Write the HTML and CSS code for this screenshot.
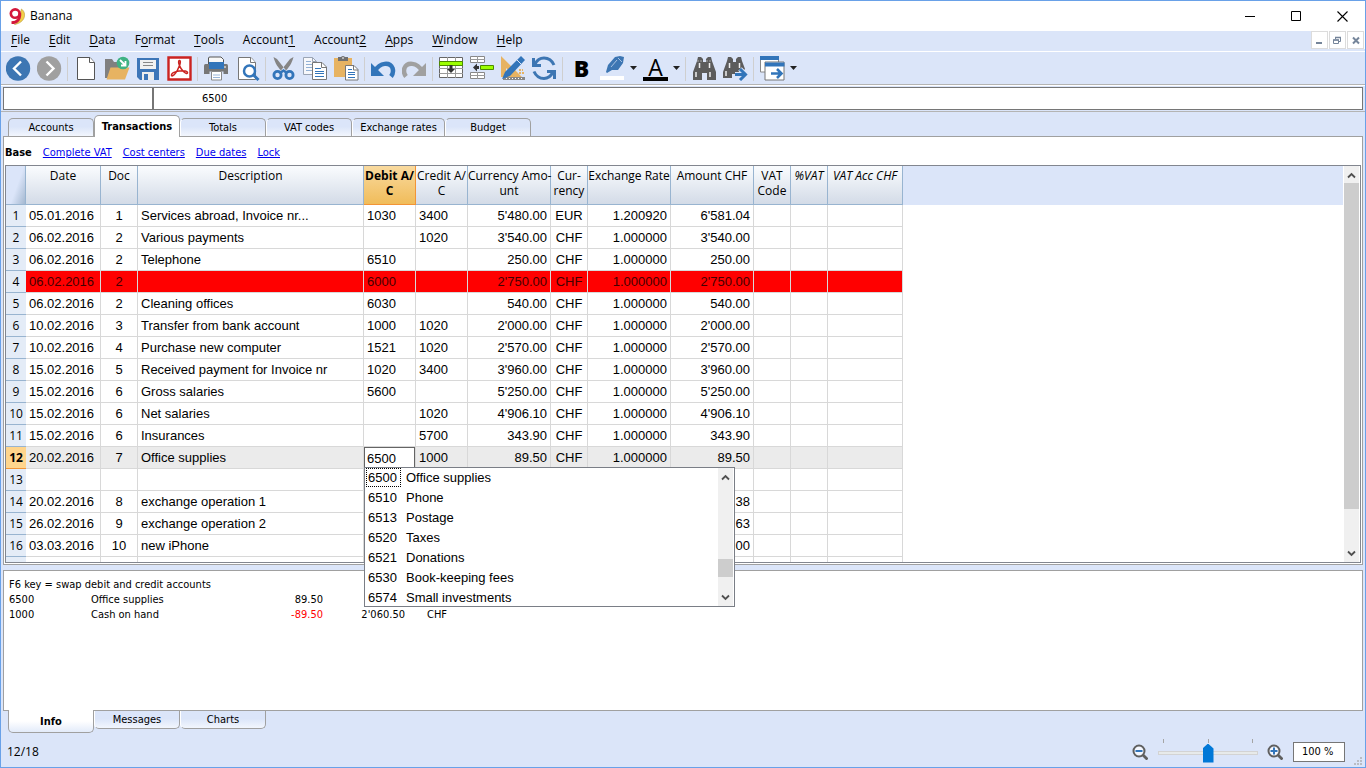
FILE: index.html
```html
<!DOCTYPE html>
<html lang="en">
<head>
<meta charset="utf-8">
<title>Banana</title>
<link rel="stylesheet" href="styles.css">
</head>
<body>
<div class="window">
  <header class="titlebar">
    <svg class="logo" viewBox="0 0 16 17"><path d="M12.500 1C18 5 16.500 14.500 5.500 16.500C11 13.500 12.500 9 11.700 3.500Z" fill="#f3cf49" stroke="#b89a3c" stroke-width=".6"/><ellipse cx="6.200" cy="5.600" rx="4.400" ry="4.200" fill="#fff" stroke="#d3173a" stroke-width="2.600"/><path d="M10.700 5C11.300 10.500 9 14.500 2.500 14.700" fill="none" stroke="#d3173a" stroke-width="2.800"/></svg>
    <h1 class="title">Banana</h1>
    <div class="caption-buttons">
      <button aria-label="Minimize"><svg viewBox="0 0 11 11"><path d="M0 5.500H10" stroke="#000"/></svg></button>
      <button aria-label="Maximize"><svg viewBox="0 0 11 11"><path d="M.5.5H9.500V9.500H.5Z" fill="none" stroke="#000"/></svg></button>
      <button aria-label="Close"><svg viewBox="0 0 11 11"><path d="M.5.5L10.500 10.500M10.500.5L.5 10.500" stroke="#000" stroke-width="1.100"/></svg></button>
    </div>
  </header>

  <nav class="menubar">
    <button><u>F</u>ile</button>
    <button><u>E</u>dit</button>
    <button><u>D</u>ata</button>
    <button>F<u>o</u>rmat</button>
    <button><u>T</u>ools</button>
    <button>Account<u>1</u></button>
    <button>Account<u>2</u></button>
    <button><u>A</u>pps</button>
    <button><u>W</u>indow</button>
    <button><u>H</u>elp</button>
    <div class="mdi-buttons">
      <button aria-label="Minimize document"><svg viewBox="0 0 9 9"><path d="M1 7H7" stroke="#75859a" stroke-width="2"/></svg></button>
      <button aria-label="Restore document"><svg viewBox="0 0 9 9"><path d="M2.500 3V1.500H7.500V5.500H6M.5 4V7.500H5.500V4Z" fill="none" stroke="#75859a"/><path d="M2 1.500H8M0 4H6" stroke="#75859a" stroke-width="1.500"/></svg></button>
      <button aria-label="Close document"><svg viewBox="0 0 9 9"><path d="M2 1.500L8 7.500M8 1.500L2 7.500" stroke="#75859a" stroke-width="2"/></svg></button>
    </div>
  </nav>

  <div class="toolbar" role="toolbar" aria-label="Main">
    <button aria-label="Back"><svg viewBox="0 0 25 25"><circle cx="12" cy="12.500" r="12.200" fill="#3d76b3"/><path d="M15 5.500L8 12.500L15 19.500" fill="none" stroke="#fff" stroke-width="2.400"/></svg></button>
    <button aria-label="Forward"><svg viewBox="0 0 25 25"><circle cx="12" cy="12.500" r="12.200" fill="#a0a0a0"/><path d="M9.500 5.500L16.500 12.500L9.500 19.500" fill="none" stroke="#fff" stroke-width="2.400"/></svg></button>
    <span class="sep"></span>
    <button aria-label="New"><svg viewBox="0 0 25 25"><path d="M3.500 1.500H16L20.500 6.500V23.500H3.500Z" fill="#fff" stroke="#555"/><path d="M15.500 1.500V6.500H20.500" fill="#fff" stroke="#555"/></svg></button>
    <button aria-label="Open"><svg viewBox="0 0 25 25"><path d="M0 3H7L9 6H17V13H6L3 22H0Z" fill="#808080"/><path d="M5.500 11.500H24.500L20 23.500H1.500Z" fill="#e7b362"/><circle cx="18" cy="7" r="6.300" fill="#3fb283"/><path d="M15 4L20 9M20.500 5V9.500H16" fill="none" stroke="#fff" stroke-width="1.800"/></svg></button>
    <button aria-label="Save"><svg viewBox="0 0 25 25"><path d="M1 2H23V24H4L1 21Z" fill="#3d76b8"/><path d="M4 4H20V13H4Z" fill="#f1f1f1"/><path d="M7 6.500H17M7 9.500H17" stroke="#888"/><path d="M6 16H18V24H6Z" fill="#ededed"/><path d="M8 18H12V24H8Z" fill="#3d76b8"/></svg></button>
    <button aria-label="Export PDF"><svg viewBox="0 0 25 25"><path d="M1.500 1.500H23.500V23.500H1.500Z" fill="#fff" stroke="#cb2320" stroke-width="2.400"/><path d="M4.500 19.500C4 16.500 9 15.500 12 15C17 14.200 21 15 20.500 17C19.500 19 14 14 12.500 9.500C11.300 6.500 11.300 4.500 12.500 4.500C14.500 5 12.500 10 10.500 14C8.500 18 5.500 21 4.500 19.500Z" fill="none" stroke="#cb2320" stroke-width="1.500"/></svg></button>
    <span class="sep"></span>
    <button aria-label="Print"><svg viewBox="0 0 25 25"><path d="M0 9.500Q0 8 1.500 8H22.500Q24 8 24 9.500V18H0Z" fill="#777"/><path d="M4.500 8V2Q4.500 1 6 1H17L19.500 3.500V8" fill="#f8f8f8" stroke="#555"/><path d="M5 6H20V13H5Z" fill="#3275ba"/><path d="M5.500 15.500H19.500V18H5.500Z" fill="#dbe5f9"/><path d="M7.500 15.500H17.500V24H7.500Z" fill="#fff" stroke="#888"/><path d="M9 19H16M9 21.500H16" stroke="#99b6d9"/><path d="M20 11H22" stroke="#fff"/></svg></button>
    <button aria-label="Print preview"><svg viewBox="0 0 25 25"><path d="M3.500 1.500H16L20.500 6.500V23.500H3.500Z" fill="#fff" stroke="#777"/><path d="M15.500 1.500V6.500H20.500" fill="#fff" stroke="#777"/><circle cx="14.500" cy="15" r="5.500" fill="#fff" stroke="#3275ba" stroke-width="2.500"/><path d="M18.500 19L23.500 24" stroke="#3275ba" stroke-width="3"/></svg></button>
    <span class="sep"></span>
    <button aria-label="Cut"><svg viewBox="0 0 25 25"><path d="M1.500 1L5 3L14.500 15L11.500 17C6 12 3 7 1.500 1ZM21.500 1L18 3L8.500 15L11.500 17C17 12 20 7 21.500 1Z" fill="#858585"/><circle cx="5.500" cy="19" r="3.600" fill="none" stroke="#3275ba" stroke-width="2.800"/><circle cx="17.500" cy="19" r="3.600" fill="none" stroke="#3275ba" stroke-width="2.800"/><path d="M8 17L11.500 14.500L15 17" fill="none" stroke="#3275ba" stroke-width="2.400"/></svg></button>
    <button aria-label="Copy"><svg viewBox="0 0 25 25"><path d="M.5 1.500H9.500L13.500 5.500V18.500H.5Z" fill="#f7f8fb" stroke="#9ba5b5"/><path d="M9.500 1.500V5.500H13.500" fill="none" stroke="#9ba5b5"/><path d="M3 5.500H8M3 8.500H10M3 11.500H10M3 14.500H10" stroke="#92b1d6"/><path d="M9.500 6.500H19L23.500 11V23.500H9.500Z" fill="#fff" stroke="#777"/><path d="M18.500 6.500V11.500H23.500" fill="none" stroke="#777"/><path d="M12 12.500H18M12 15.500H21M12 17.500H21M12 20.500H21" stroke="#3275ba"/></svg></button>
    <button aria-label="Paste"><svg viewBox="0 0 25 25"><path d="M0 2H18V21H0Z" fill="#e7b362"/><path d="M4 1H7Q9-1 11 1H14V5H4Z" fill="#707070"/><path d="M8 2H10" stroke="#fff"/><path d="M11.500 9.500H20L24 13.500V24H11.500Z" fill="#fff" stroke="#777"/><path d="M19.500 9.500V14H24" fill="none" stroke="#777"/><path d="M14 13.500H18M14 16.500H21M14 18.500H21M14 21.500H21" stroke="#3275ba"/></svg></button>
    <span class="sep"></span>
    <button aria-label="Undo"><svg viewBox="0 0 25 25"><path d="M4 15C9 6 19 6 21.500 12C22.500 15 22 18 20 20.500" fill="none" stroke="#3275ba" stroke-width="4.500"/><path d="M0 7V20H13Z" fill="#3275ba"/></svg></button>
    <button aria-label="Redo"><svg viewBox="0 0 25 25"><path d="M20 15C15 6 5 6 2.500 12C1.500 15 2 18 4 20.500" fill="none" stroke="#a0a0a0" stroke-width="4.500"/><path d="M24 7V20H11Z" fill="#a0a0a0"/></svg></button>
    <span class="sep"></span>
    <button aria-label="Insert rows"><svg viewBox="0 0 25 25"><path d="M.5 1.500H23.500V21.500H.5Z" fill="#fff" stroke="#666"/><path d="M8.500 1V22M16.500 1V22M0 12.500H24M0 17.500H24" stroke="#999"/><path d="M.5 5.500H23.500V9.500H.5Z" fill="#9cff00" stroke="#4d8b00"/><path d="M12 9V14" stroke="#333" stroke-width="3"/><path d="M8 13H16L12 17Z" fill="#333"/></svg></button>
    <button aria-label="Delete rows"><svg viewBox="0 0 25 25"><path d="M.5.5H14.500V6.500H.5ZM.5 16.500H14.500V22.500H.5Z" fill="#fff" stroke="#888"/><path d="M0 3.500H15M0 19.500H15M7.500 0V7M7.500 16V23" stroke="#999"/><path d="M10.500 9.500H23.500V13.500H10.500Z" fill="#9cff00" stroke="#4d8b00"/><path d="M5 11.500H9" stroke="#333" stroke-width="3"/><path d="M7 7.500V15.500L3 11.500Z" fill="#333"/></svg></button>
    <button aria-label="Design"><svg viewBox="0 0 25 25"><path d="M0 0V21H21ZM5 12L10 17H5Z" fill="#e7b362" fill-rule="evenodd"/><path d="M2 21H24V24H2Z" fill="#888"/><path d="M5 22.500H23" stroke="#fff" stroke-dasharray="1 2"/><path d="M20 0L24 4L9 20L1 23L4 16Z" fill="#3275ba"/><path d="M16 4L20.500 8.500" stroke="#dbe5f9"/><path d="M18 14H22M18 17H23" stroke="#e7b362" stroke-width="2" stroke-dasharray="2 1"/></svg></button>
    <button aria-label="Refresh"><svg viewBox="0 0 25 25"><path d="M3 8C5 4 8 2 12 2C17 2 20 4.500 22 9M21 16C19 20 16 22.500 12 22.500C7 22.500 4 20 2 15.500" fill="none" stroke="#3d76b3" stroke-width="3"/><path d="M1.500 2V9.500H9M22.500 23V15.500H15" fill="none" stroke="#3d76b3" stroke-width="3"/></svg></button>
    <span class="sep"></span>
    <button class="bold-button" aria-label="Bold">B</button>
    <button aria-label="Highlight colour"><svg viewBox="0 0 25 25"><path d="M0 20H24V24H0Z" fill="#fff"/><path d="M15 1L20 0L24 1L23 7L18 14L12 14L7 17L6 16L8 9Z" fill="#3d76b3"/><path d="M11 11L17 4M18 2L22 6" stroke="#a6c1e2"/></svg></button>
    <button class="drop" aria-label="Highlight options"><svg viewBox="0 0 8 5"><path d="M0 0H7L3.500 4Z" fill="#222"/></svg></button>
    <button class="font-colour" aria-label="Text colour">A</button>
    <button class="drop" aria-label="Text colour options"><svg viewBox="0 0 8 5"><path d="M0 0H7L3.500 4Z" fill="#222"/></svg></button>
    <span class="sep"></span>
    <button aria-label="Find"><svg viewBox="0 0 25 25"><path d="M6 1H9L11 3V6H14V3L16 1H19L20 5L24 16V24H15V17H10V24H1V16L5 5Z" fill="#5c5c5c"/><path d="M7.500 7V12M17.500 7V12M4 16V21M18 16V21" stroke="#eee" stroke-width="1.500"/><path d="M5 5H11M14 5H20" stroke="#a5a5a5" stroke-dasharray="2 1"/></svg></button>
    <button aria-label="Find next"><svg viewBox="0 0 25 25"><path d="M5 1H8L10 3V6H13V3L15 1H18L19 5L22 13L18 18H9V22H0V16L4 5Z" fill="#5c5c5c"/><path d="M6.500 7V12M16.500 7V12M3 15V20" stroke="#eee" stroke-width="1.500"/><path d="M12 18.500H22M17 13L22.500 18.500L17 24" fill="none" stroke="#dbe5f9" stroke-width="5"/><path d="M12 18.500H22M17 13L22.500 18.500L17 24" fill="none" stroke="#3275ba" stroke-width="3"/></svg></button>
    <span class="sep"></span>
    <button aria-label="Windows"><svg viewBox="0 0 25 25"><path d="M.5 1H18.500V16H.5Z" fill="#fff" stroke="#888"/><path d="M0 0H19V4H0Z" fill="#3275ba"/><path d="M5 6H24V24H5Z" fill="#fff" stroke="#777"/><path d="M5 6.500H24.500V10.500H5Z" fill="#3275ba"/><path d="M11 17.500H21M17 13L21.500 17.500L17 22" fill="none" stroke="#3275ba" stroke-width="2.600"/></svg></button>
    <button class="drop" aria-label="Window list"><svg viewBox="0 0 8 5"><path d="M0 0H7L3.500 4Z" fill="#222"/></svg></button>
  </div>

  <div class="edit-line">
    <input class="cell-name" type="text" aria-label="Cell">
    <input class="cell-value" type="text" aria-label="Cell content" value="6500">
  </div>

  <main class="workspace">
    <nav class="tabs">
      <button>Accounts</button>
      <button class="active">Transactions</button>
      <button>Totals</button>
      <button>VAT codes</button>
      <button class="wide">Exchange rates</button>
      <button>Budget</button>
    </nav>
    <section class="sheet">
      <div class="views">
        <strong>Base</strong>
        <a href="#complete-vat">Complete VAT</a>
        <a href="#cost-centers">Cost centers</a>
        <a href="#due-dates">Due dates</a>
        <a href="#lock">Lock</a>
      </div>
      <div class="grid">
        <div class="grid-view">
          <table class="ledger">
            <colgroup><col class="w-row"><col class="w-date"><col class="w-s"><col class="w-desc"><col class="w-acc"><col class="w-acc"><col class="w-amt"><col class="w-s"><col class="w-amt"><col class="w-amt"><col class="w-s"><col class="w-s"><col class="w-date"></colgroup>
            <thead>
              <tr><th class="corner"></th><th>Date</th><th>Doc</th><th>Description</th><th class="current">Debit A/<br>C</th><th>Credit A/<br>C</th><th>Currency Amo-<br>unt</th><th>Cur-<br>rency</th><th>Exchange Rate</th><th>Amount CHF</th><th>VAT<br>Code</th><th class="calc">%VAT</th><th class="calc">VAT Acc CHF</th></tr>
            </thead>
            <tbody>
              <tr><th>1</th><td>05.01.2016</td><td class="c">1</td><td>Services abroad, Invoice nr...</td><td>1030</td><td>3400</td><td class="r">5'480.00</td><td class="c">EUR</td><td class="r">1.200920</td><td class="r">6'581.04</td><td></td><td></td><td></td></tr>
              <tr><th>2</th><td>06.02.2016</td><td class="c">2</td><td>Various payments</td><td></td><td>1020</td><td class="r">3'540.00</td><td class="c">CHF</td><td class="r">1.000000</td><td class="r">3'540.00</td><td></td><td></td><td></td></tr>
              <tr><th>3</th><td>06.02.2016</td><td class="c">2</td><td>Telephone</td><td>6510</td><td></td><td class="r">250.00</td><td class="c">CHF</td><td class="r">1.000000</td><td class="r">250.00</td><td></td><td></td><td></td></tr>
              <tr class="flagged"><th>4</th><td>06.02.2016</td><td class="c">2</td><td></td><td>6000</td><td></td><td class="r">2'750.00</td><td class="c">CHF</td><td class="r">1.000000</td><td class="r">2'750.00</td><td></td><td></td><td></td></tr>
              <tr><th>5</th><td>06.02.2016</td><td class="c">2</td><td>Cleaning offices</td><td>6030</td><td></td><td class="r">540.00</td><td class="c">CHF</td><td class="r">1.000000</td><td class="r">540.00</td><td></td><td></td><td></td></tr>
              <tr><th>6</th><td>10.02.2016</td><td class="c">3</td><td>Transfer from bank account</td><td>1000</td><td>1020</td><td class="r">2'000.00</td><td class="c">CHF</td><td class="r">1.000000</td><td class="r">2'000.00</td><td></td><td></td><td></td></tr>
              <tr><th>7</th><td>10.02.2016</td><td class="c">4</td><td>Purchase new computer</td><td>1521</td><td>1020</td><td class="r">2'570.00</td><td class="c">CHF</td><td class="r">1.000000</td><td class="r">2'570.00</td><td></td><td></td><td></td></tr>
              <tr><th>8</th><td>15.02.2016</td><td class="c">5</td><td>Received payment for Invoice nr</td><td>1020</td><td>3400</td><td class="r">3'960.00</td><td class="c">CHF</td><td class="r">1.000000</td><td class="r">3'960.00</td><td></td><td></td><td></td></tr>
              <tr><th>9</th><td>15.02.2016</td><td class="c">6</td><td>Gross salaries</td><td>5600</td><td></td><td class="r">5'250.00</td><td class="c">CHF</td><td class="r">1.000000</td><td class="r">5'250.00</td><td></td><td></td><td></td></tr>
              <tr><th>10</th><td>15.02.2016</td><td class="c">6</td><td>Net salaries</td><td></td><td>1020</td><td class="r">4'906.10</td><td class="c">CHF</td><td class="r">1.000000</td><td class="r">4'906.10</td><td></td><td></td><td></td></tr>
              <tr><th>11</th><td>15.02.2016</td><td class="c">6</td><td>Insurances</td><td></td><td>5700</td><td class="r">343.90</td><td class="c">CHF</td><td class="r">1.000000</td><td class="r">343.90</td><td></td><td></td><td></td></tr>
              <tr class="selected"><th>12</th><td>20.02.2016</td><td class="c">7</td><td>Office supplies</td><td class="editing"><input type="text" aria-label="Debit account" value="6500"></td><td>1000</td><td class="r">89.50</td><td class="c">CHF</td><td class="r">1.000000</td><td class="r">89.50</td><td></td><td></td><td></td></tr>
              <tr><th>13</th><td></td><td></td><td></td><td></td><td></td><td></td><td></td><td></td><td></td><td></td><td></td><td></td></tr>
              <tr><th>14</th><td>20.02.2016</td><td class="c">8</td><td>exchange operation 1</td><td></td><td></td><td></td><td></td><td></td><td class="r">38</td><td></td><td></td><td></td></tr>
              <tr><th>15</th><td>26.02.2016</td><td class="c">9</td><td>exchange operation 2</td><td></td><td></td><td></td><td></td><td></td><td class="r">63</td><td></td><td></td><td></td></tr>
              <tr><th>16</th><td>03.03.2016</td><td class="c">10</td><td>new iPhone</td><td></td><td></td><td></td><td></td><td></td><td class="r">00</td><td></td><td></td><td></td></tr>
              <tr><th></th><td></td><td></td><td></td><td></td><td></td><td></td><td></td><td></td><td></td><td></td><td></td><td></td></tr>
            </tbody>
          </table>
        </div>
        <div class="scrollbar">
          <svg viewBox="0 0 9 7"><path d="M1 5.500L4.500 2L8 5.500" fill="none" stroke="#505050" stroke-width="1.800"/></svg>
          <div class="track"><div class="thumb"></div></div>
          <svg viewBox="0 0 9 7"><path d="M1 1.500L4.500 5L8 1.500" fill="none" stroke="#505050" stroke-width="1.800"/></svg>
        </div>
        <div class="popup">
          <ul role="listbox" aria-label="Accounts">
            <li role="option" aria-selected="true"><span class="code focus">6500</span><span>Office supplies</span></li>
            <li role="option"><span class="code">6510</span><span>Phone</span></li>
            <li role="option"><span class="code">6513</span><span>Postage</span></li>
            <li role="option"><span class="code">6520</span><span>Taxes</span></li>
            <li role="option"><span class="code">6521</span><span>Donations</span></li>
            <li role="option"><span class="code">6530</span><span>Book-keeping fees</span></li>
            <li role="option"><span class="code">6574</span><span>Small investments</span></li>
          </ul>
          <div class="scrollbar">
            <svg viewBox="0 0 9 7"><path d="M1 5.500L4.500 2L8 5.500" fill="none" stroke="#505050" stroke-width="1.800"/></svg>
            <div class="track low"><div class="thumb short"></div></div>
            <svg viewBox="0 0 9 7"><path d="M1 1.500L4.500 5L8 1.500" fill="none" stroke="#505050" stroke-width="1.800"/></svg>
          </div>
        </div>
      </div>
    </section>
  </main>

  <section class="info">
    <p>F6 key = swap debit and credit accounts</p>
    <table class="balances">
      <tr><td class="code">6500</td><td class="name">Office supplies</td><td class="num">89.50</td><td class="num"></td><td class="cur"></td></tr>
      <tr><td class="code">1000</td><td class="name">Cash on hand</td><td class="num neg">-89.50</td><td class="num">2'060.50</td><td class="cur">CHF</td></tr>
    </table>
  </section>
  <nav class="tabs bottom">
    <button class="active">Info</button>
    <button>Messages</button>
    <button>Charts</button>
  </nav>

  <footer class="status">
    <span class="position">12/18</span>
    <button aria-label="Zoom out"><svg viewBox="0 0 16 16"><circle cx="7" cy="7" r="5.500" fill="#f5f8ff" stroke="#5f5f5f" stroke-width="2"/><path d="M11 11L15.500 15.500" stroke="#5f5f5f" stroke-width="2.800"/><path d="M3.500 7H10.500" stroke="#3275ba" stroke-width="2"/></svg></button>
    <label class="zoom-slider">
      <span class="ticks"><i></i><i></i><i></i></span>
      <input type="range" min="0" max="200" value="100" aria-label="Zoom">
    </label>
    <button aria-label="Zoom in"><svg viewBox="0 0 16 16"><circle cx="7" cy="7" r="5.500" fill="#f5f8ff" stroke="#5f5f5f" stroke-width="2"/><path d="M11 11L15.500 15.500" stroke="#5f5f5f" stroke-width="2.800"/><path d="M3.500 7H10.500M7 3.500V10.500" stroke="#3275ba" stroke-width="2"/></svg></button>
    <input class="zoom-value" type="text" aria-label="Zoom level" value="100 %">
    <svg class="grip" viewBox="0 0 9 9"><path d="M6 0H8V2H6ZM3 3H5V5H3ZM6 3H8V5H6ZM0 6H2V8H0ZM3 6H5V8H3ZM6 6H8V8H6Z" fill="#b9bcc4"/></svg>
  </footer>
</div>
</body>
</html>
```
FILE: styles.css
```css
* { box-sizing: border-box; }

:root {
  --ui: "Open Sans", "Noto Sans", sans-serif;
  --small: "DejaVu Sans Condensed", "DejaVu Sans", sans-serif;
  --cell: "Liberation Sans", Arial, sans-serif;
  --blue: #dbe5f9;
  --line: #a0a0a0;
}

body {
  margin: 0;
  color: #000;
  font: 11px/15px var(--small);
}

button, input { font: inherit; color: inherit; }
button { border: 0; padding: 0; background: none; }
svg { display: block; }

.window {
  display: flex;
  flex-direction: column;
  height: 100vh;
  border: 1px solid #69a1e8;
  background: var(--blue);
  overflow: hidden;
}

/* Title bar */
.titlebar {
  display: flex;
  align-items: center;
  flex: 0 0 30px;
  padding-left: 8px;
  background: #fff;
}
.logo { width: 16px; height: 17px; }
.title { margin: 0 0 0 5px; font: 12px/16px var(--ui); }
.caption-buttons { display: flex; margin-left: auto; }
.caption-buttons button { display: flex; justify-content: center; width: 46px; }
.caption-buttons svg { width: 11px; height: 11px; }

/* Menu bar */
.menubar {
  display: flex;
  align-items: center;
  flex: 0 0 21px;
  gap: 19px;
  padding: 0 0 2px 10px;
  border-bottom: 1px solid #fff;
  font: 12px/18px var(--ui);
}
.menubar u { text-underline-offset: 2px; }
.mdi-buttons { display: flex; gap: 1px; margin-left: auto; padding-right: 1px; background: #fff; }
.mdi-buttons button {
  display: grid;
  place-items: center;
  width: 17px;
  height: 18px;
  border: 1px solid #dcdcdc;
  background: #fff;
}
.mdi-buttons svg { width: 9px; height: 9px; }

/* Toolbar */
.toolbar {
  display: flex;
  align-items: center;
  flex: 0 0 34px;
  gap: 6px;
  padding-left: 5px;
  border-bottom: 1px solid #fff;
  box-shadow: inset 0 -1px #b4b4b4;
}
.toolbar button { flex: 0 0 25px; height: 25px; }
.toolbar svg { width: 25px; height: 25px; }
.toolbar .sep { width: 1px; height: 24px; margin-left: -1px; background: #cfcfcf; }
.toolbar .drop { display: flex; align-items: center; justify-content: center; flex-basis: 6px; min-width: 0; }
.toolbar .drop svg { flex: none; width: 8px; height: 5px; }
.toolbar .bold-button { font: 800 23px/25px var(--ui); }
.toolbar .font-colour {
  border-bottom: 4px solid #000;
  font: 23px/20px var(--ui);
}

/* Edit line */
.edit-line {
  display: flex;
  flex: 0 0 26px;
  padding: 1px 2px 1px 2px;
  border-bottom: 1px solid #b4b4b4;
}
.edit-line input { height: 23px; border: 1px solid #767676; background: #fff; outline: 0; }
.cell-name { width: 150px; padding: 0 4px; }
.cell-value { flex: 1; padding: 0 48px; }

/* Tabs */
.tabs { display: flex; align-items: flex-end; padding-left: 5px; }
.tabs button {
  width: 86px;
  height: 18px;
  border: 1px solid var(--line);
  border-left-color: #fff;
  border-bottom: 0;
  border-radius: 5px 5px 0 0;
  background: linear-gradient(#dbe5f9 45%, #f2f6fd);
}
.tabs button:first-child { border-left-color: var(--line); }
.tabs .wide { width: 93px; }
.tabs .active {
  position: relative;
  height: 22px;
  margin-bottom: -1px;
  border-left-color: var(--line);
  background: #fff;
  font-weight: bold;
}
.tabs.bottom { align-items: flex-start; padding-left: 7px; }
.tabs.bottom button {
  border: 1px solid var(--line);
  border-top: 0;
  border-left-color: #fff;
  border-radius: 0 0 5px 5px;
  background: linear-gradient(#dbe5f9 45%, #f2f6fd);
}
.tabs.bottom .active {
  height: 23px;
  margin: -1px 0 0;
  border-left-color: var(--line);
  background: linear-gradient(#fff 50%, #e3ebfa);
}

/* Sheet */
.workspace {
  display: flex;
  flex-direction: column;
  flex: 1;
  min-height: 0;
  padding: 3px 2px 0 2px;
}
.sheet {
  display: flex;
  flex-direction: column;
  flex: 1;
  min-height: 0;
  padding: 0 1px 1px;
  border: 1px solid var(--line);
  background: #fff;
}
.views { display: flex; align-items: center; gap: 11px; flex: 0 0 28px; padding-top: 3px; }
.views a { color: #00e; }
.grid {
  position: relative;
  display: flex;
  flex: 1;
  min-height: 0;
  border: 1px solid #82868f;
}
.grid-view {
  flex: 1;
  overflow: hidden;
  background: linear-gradient(var(--blue) 39px, #fff 39px);
}

.ledger {
  table-layout: fixed;
  width: 897px;
  border-collapse: separate;
  border-spacing: 0;
  font: 13px/21px var(--cell);
}
.w-row { width: 20px; }
.w-date { width: 75px; }
.w-s { width: 37px; }
.w-desc { width: 226px; }
.w-acc { width: 52px; }
.w-amt { width: 83px; }

.ledger th { padding: 0; font: 12px/15px var(--ui); }
.ledger thead th {
  height: 39px;
  padding-top: 2px;
  vertical-align: top;
  white-space: nowrap;
  border-right: 1px solid #98b4d0;
  border-bottom: 1px solid #98b4d0;
  background: linear-gradient(#fafcfe, #d3dbe7);
}
.ledger thead .corner { background: linear-gradient(110deg, var(--blue) 55%, #a4b8d0); }
.ledger thead .current {
  border-color: #f29436;
  background: linear-gradient(#f9da9f, #f0bc5a);
  font-weight: bold;
}
.ledger thead .calc { font-style: italic; }
.ledger tbody th {
  height: 22px;
  border-bottom: 1px solid #98b4d0;
  background: #e4ecf7;
}
.ledger td {
  height: 22px;
  padding: 0 3px;
  border-right: 1px solid #d8d8d8;
  border-bottom: 1px solid #d8d8d8;
  background: #fff;
  white-space: nowrap;
}
.ledger .c { padding: 0; text-align: center; }
.ledger .r { text-align: right; }
.ledger .flagged td { background: #f00; color: #400; }
.ledger .selected td { background: #ebebeb; }
.ledger .selected th { border-color: #f29436; background: #ffd58d; font-weight: bold; }
.ledger .editing { padding: 0; }
.editing input {
  display: block;
  width: 100%;
  height: 21px;
  padding: 0 2px;
  border: 1px solid #646464;
  border-bottom: 0;
  background: #fff;
  outline: 0;
}

/* Scroll bars */
.scrollbar {
  display: flex;
  flex-direction: column;
  align-items: center;
  flex: 0 0 15px;
  margin: 0 1px;
  padding: 6px 0 5px;
  background: #f0f0f0;
}
.scrollbar svg { width: 9px; height: 7px; }
.track { display: flex; flex-direction: column; flex: 1; align-self: stretch; padding: 4px 0 5px; }
.thumb { height: 90%; background: #cdcdcd; }
.track.low { justify-content: flex-end; padding-bottom: 17px; }
.thumb.short { height: 18px; }

/* Account list under the cell being edited */
.popup {
  position: absolute;
  left: 358px;
  top: 301px;
  display: flex;
  width: 371px;
  border: 1px solid #7a7e86;
  background: #fff;
  font: 13px/19px var(--cell);
}
.popup ul { flex: 1; margin: 0; padding: 0 1px; list-style: none; }
.popup li { display: flex; align-items: flex-start; gap: 5px; height: 20px; }
.popup li:last-child { height: 18px; }
.popup .code { width: 35px; padding-left: 1px; border: 1px solid transparent; line-height: 17px; }
.popup .focus { border: 1px dotted #000; }

/* Info panel */
.info {
  flex: 0 0 141px;
  margin: 5px 2px 0 2px;
  padding: 6px 5px;
  border: 1px solid var(--line);
  background: #fff;
}
.info p { margin: 0; }
.balances { table-layout: fixed; border-spacing: 0; }
.balances td { padding: 0; white-space: nowrap; }
.balances .code { width: 82px; }
.balances .name { width: 150px; }
.balances .num { width: 82px; text-align: right; }
.balances .cur { padding-left: 22px; }
.balances .neg { color: #f00; }

/* Status bar */
.status { display: flex; align-items: center; flex: 0 0 34px; padding: 3px 2px 0 6px; }
.position { flex: 1; font: 12px/16px var(--ui); }
.status button svg { width: 16px; height: 16px; }
.zoom-slider { width: 100px; height: 26px; margin: 0 9px 0 10px; }
.ticks { display: flex; justify-content: space-between; padding: 0 5px; }
.ticks i { width: 1px; height: 4px; background: #a5a5a5; }
.zoom-slider input { display: block; width: 100%; height: 20px; margin: 0; background: none; appearance: none; }
.zoom-slider input::-webkit-slider-runnable-track {
  height: 4px;
  border: 1px solid #d3d3d3;
  background: #e7eaea;
}
.zoom-slider input::-webkit-slider-thumb {
  width: 11px;
  height: 19px;
  margin-top: -8px;
  background: #0078d7;
  clip-path: polygon(0 5px, 50% 0, 100% 5px, 100% 100%, 0 100%);
  appearance: none;
}
.zoom-value {
  width: 52px;
  height: 20px;
  margin: 0 9px 0 10px;
  padding: 0 8px;
  border: 1px solid #767676;
  background: #fff;
}
.grip { align-self: flex-end; width: 9px; height: 9px; margin-bottom: 1px; }
```
